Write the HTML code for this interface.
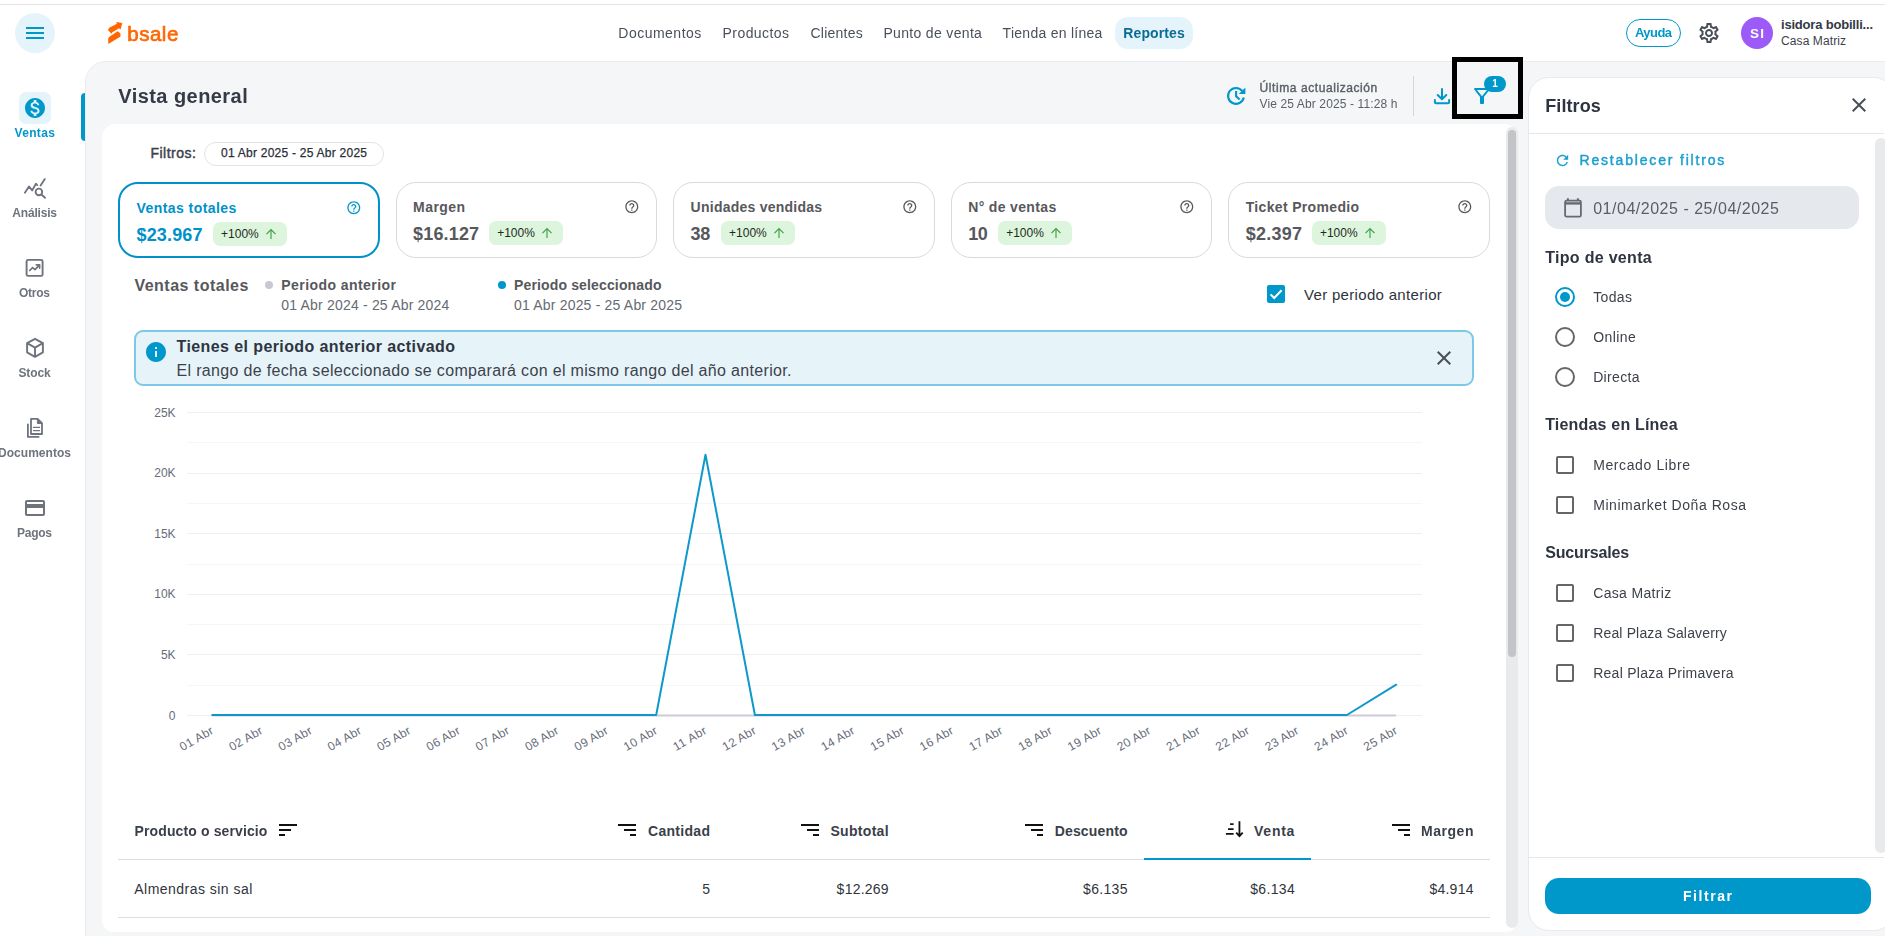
<!DOCTYPE html>
<html lang="es">
<head>
<meta charset="utf-8">
<title>Bsale - Reportes - Vista general</title>
<style>
*{box-sizing:border-box;margin:0;padding:0}
html,body{width:1885px;height:936px;overflow:hidden;background:#fff}
body{position:relative;font-family:"Liberation Sans",sans-serif;color:#333a45}
.t{position:absolute;white-space:pre;line-height:1;display:block}
.abs{position:absolute}
svg{position:absolute;overflow:visible;display:block}
#topline{left:0;top:4px;width:1885px;height:1px;background:#e4e4e6}
#main{left:85px;top:61px;width:1800px;height:875px;background:#f5f6f8;border-left:1px solid #ececef;border-top:1px solid #ececef;border-top-left-radius:21px}
#card{left:102px;top:124px;width:1416px;height:808px;background:#fff;border-radius:14px 14px 12px 12px}
#track{left:1506px;top:127px;width:12px;height:801px;background:#e9eaec;border-radius:6px}
#thumb{left:1508px;top:130px;width:8px;height:527px;background:#c3c4c8;border-radius:4px}
#fpanel{left:1528px;top:77px;width:367px;height:854px;background:#fff;border:1px solid #e8e9ec;border-radius:21px}
#fhead{left:1529px;top:133px;width:355px;height:1px;background:#e6e7ea}
#ffoot{left:1529px;top:857px;width:355px;height:1px;background:#e6e7ea}
#ftrack{left:1875px;top:138px;width:12px;height:715px;background:#e9eaec;border-radius:6px}
#fbtn{left:1545px;top:878px;width:326px;height:36px;background:#0098cb;border-radius:14px}
#dateinp{left:1545px;top:186px;width:314px;height:43px;background:#e5e8ed;border-radius:14px}
#blackbox{left:1452px;top:57px;width:71px;height:62px;border:5px solid #000}
#vdiv{left:1413px;top:76px;width:1px;height:40px;background:#d4d6da}
#indicator{left:81px;top:93px;width:4px;height:48px;background:#0098cb;border-radius:4px 0 0 4px}
#venbg{left:19px;top:92px;width:32px;height:32px;background:#e5f4fb;border-radius:7px}
#hamb{left:15px;top:13px;width:40px;height:40px;border-radius:50%;background:#e5f4fb}
#navpill{left:1115px;top:17px;width:78px;height:32px;border-radius:13px;background:#e5f4fb}
#ayuda{left:1626px;top:19px;width:55px;height:28px;border:1px solid #0098cb;border-radius:14px}
#avatar{left:1741px;top:17px;width:32px;height:32px;border-radius:50%;background:#9c5af6}
#chip{left:204px;top:142px;width:180px;height:24px;border:1px solid #e2e3e6;border-radius:12px}
.kpi{top:182px;width:261.5px;height:76px;border:1px solid #dadadc;border-radius:20px;background:#fff}
.kpi.sel{border:2px solid #0091c8}
.badge{width:74px;height:24px;background:#dcf5dc;border-radius:7px}
.dot{width:8px;height:8px;border-radius:50%}
#chk{left:1267px;top:285px;width:18px;height:18px;background:#0098cb;border-radius:2px}
#banner{left:134px;top:330px;width:1340px;height:56px;background:#e6f4fa;border:2px solid #7cc8e6;border-radius:9px}
.hline{height:1px;background:#dcdde0;left:118px;width:1372px}
#venta-ul{left:1144px;top:858px;width:167px;height:2px;background:#0098cb}
.radio{width:20px;height:20px;border:2px solid #666;border-radius:50%}
.radio.on{border-color:#0098cb}
.radio.on::after{content:"";position:absolute;left:3px;top:3px;width:10px;height:10px;border-radius:50%;background:#0098cb}
.cbx{width:18px;height:18px;border:2px solid #666;border-radius:2px;left:1556px}
.gl{left:0;top:0;width:1885px;height:936px;will-change:transform;pointer-events:none}

</style>
</head>
<body>
<div class="abs" id="topline"></div>
<div class="abs" id="main"></div>
<div class="abs" id="card"></div>
<div class="abs" id="track"></div><div class="abs" id="thumb"></div>
<div class="abs" id="fpanel"></div><div class="abs" id="fhead"></div><div class="abs" id="ffoot"></div><div class="abs" id="ftrack"></div>
<header>
<div class="abs" id="hamb"></div>
<svg style="left:23px;top:21px" width="24" height="24" viewBox="0 0 24 24"><path fill="#0098cb" d="M3 18h18v-2H3v2zm0-5h18v-2H3v2zm0-7v2h18V6H3z"/></svg>
<svg style="left:100px;top:15px" width="90" height="35" viewBox="0 0 90 35"><path fill="#ff6600" d="M22.300 8.000 L16.100 6.900 L17.000 8.800 L9.700 12.600 Q7.500 13.900 8.300 15.500 L11.500 18.800 L12.300 17.200 L19.100 13.300 L20.600 14.500 Z M17.600 16.300 Q21.000 18.200 20.600 20.800 L20.200 21.700 L8.300 28.900 L8.200 24.000 Q8.300 22.600 9.800 21.600 Z"/></svg>
<div class="abs" id="navpill"></div>
<div class="abs" id="ayuda"></div>
<svg style="left:1697px;top:21px" width="24" height="24" viewBox="0 0 24 24"><path fill="#4a4f57" d="M19.43 12.98c.04-.32.07-.64.07-.98 0-.34-.03-.66-.07-.98l2.11-1.65c.19-.15.24-.42.12-.64l-2-3.46c-.09-.16-.26-.25-.44-.25-.06 0-.12.01-.17.03l-2.49 1c-.52-.4-1.08-.73-1.69-.98l-.38-2.65C14.46 2.18 14.25 2 14 2h-4c-.25 0-.46.18-.49.42l-.38 2.65c-.61.25-1.17.59-1.69.98l-2.49-1c-.06-.02-.12-.03-.18-.03-.17 0-.34.09-.43.25l-2 3.46c-.13.22-.07.49.12.64l2.11 1.65c-.04.32-.07.65-.07.98 0 .33.03.66.07.98l-2.11 1.65c-.19.15-.24.42-.12.64l2 3.46c.09.16.26.25.44.25.06 0 .12-.01.17-.03l2.49-1c.52.4 1.08.73 1.69.98l.38 2.65c.03.24.24.42.49.42h4c.25 0 .46-.18.49-.42l.38-2.65c.61-.25 1.17-.59 1.69-.98l2.49 1c.06.02.12.03.18.03.17 0 .34-.09.43-.25l2-3.46c.12-.22.07-.49-.12-.64l-2.11-1.65zm-1.98-1.71c.04.31.05.52.05.73 0 .21-.02.43-.05.73l-.14 1.13.89.7 1.08.84-.7 1.21-1.27-.51-1.04-.42-.9.68c-.43.32-.84.56-1.25.73l-1.06.43-.16 1.13-.2 1.35h-1.4l-.19-1.35-.16-1.13-1.06-.43c-.43-.18-.83-.41-1.23-.71l-.91-.7-1.06.43-1.27.51-.7-1.21 1.08-.84.89-.7-.14-1.13c-.03-.31-.05-.54-.05-.74s.02-.43.05-.73l.14-1.13-.89-.7-1.08-.84.7-1.21 1.27.51 1.04.42.9-.68c.43-.32.84-.56 1.25-.73l1.06-.43.16-1.13.2-1.35h1.39l.19 1.35.16 1.13 1.06.43c.43.18.83.41 1.23.71l.91.7 1.06-.43 1.27-.51.7 1.21-1.07.85-.89.7.14 1.13zM12 8c-2.21 0-4 1.79-4 4s1.79 4 4 4 4-1.79 4-4-1.79-4-4-4zm0 6c-1.1 0-2-.9-2-2s.9-2 2-2 2 .9 2 2-.9 2-2 2z"/></svg>
<div class="abs" id="avatar"></div>
<span class="t" style="top:18.20px;font-size:13px;font-weight:700;color:#333a45;letter-spacing:-0.197px;left:1781.00px;">isidora bobilli...</span>
<span class="t" style="top:34.64px;font-size:12px;color:#3d424a;letter-spacing:0.098px;left:1781.00px;">Casa Matriz</span>
</header>
<nav aria-label="Secciones">
<div class="abs" id="indicator"></div><div class="abs" id="venbg"></div>
<svg style="left:22.5px;top:95.8px" width="24" height="24" viewBox="0 0 24 24"><path fill="#0098cb" d="M12 2C6.48 2 2 6.48 2 12s4.48 10 10 10 10-4.48 10-10S17.52 2 12 2zm1.41 16.09V20h-2.67v-1.93c-1.71-.36-3.16-1.46-3.27-3.4h1.96c.1 1.05.82 1.87 2.65 1.87 1.96 0 2.4-.98 2.4-1.59 0-.83-.44-1.61-2.67-2.14-2.48-.6-4.18-1.62-4.18-3.67 0-1.72 1.39-2.84 3.11-3.21V4h2.67v1.950c1.86.45 2.79 1.86 2.85 3.39H14.3c-.05-1.11-.64-1.87-2.22-1.87-1.5 0-2.4.68-2.4 1.64 0 .84.65 1.39 2.67 1.91s4.18 1.39 4.18 3.91c-.01 1.83-1.38 2.83-3.12 3.160z"/></svg>
<svg style="left:15px;top:170px" width="40" height="35" viewBox="0 0 40 35" fill="none" stroke="#6e737d" stroke-width="1.850" stroke-linecap="round" stroke-linejoin="round"><path d="M9.900 22.800 L14 16.500 L17.200 20.400 L20.900 13.700 L22.300 15.100"/><path d="M25.600 15.500 L29.800 9.100"/><circle cx="23.900" cy="21.900" r="3.300"/><path d="M26.700 24.800 L30 27.800"/></svg>
<svg style="left:15px;top:250px" width="40" height="35" viewBox="0 0 40 35" fill="none" stroke="#6e737d" stroke-width="1.900" stroke-linejoin="round"><rect x="11.600" y="9.900" width="16" height="16" rx="1.500"/><path d="M14.700 20.500 L17.600 17.600 L20 19.600 L24.300 15.200" stroke-width="1.700" stroke-linecap="round"/><path d="M21.300 14.800 H24.600 V18.100" stroke-width="1.700" stroke-linecap="round"/></svg>
<svg style="left:15px;top:330px" width="40" height="35" viewBox="0 0 40 35" fill="none" stroke="#6e737d" stroke-width="1.900" stroke-linejoin="round"><path d="M20 8.800 L27.900 13.200 V22.300 L20 26.800 L12.100 22.300 V13.200 Z"/><path d="M12.100 13.200 L20 17.700 L27.900 13.200 M20 17.700 V26.800"/></svg>
<svg style="left:15px;top:410px" width="40" height="35" viewBox="0 0 40 35" fill="none" stroke="#6e737d" stroke-width="1.800" stroke-linejoin="round"><path d="M16 8.900 H22.600 L27 13.100 V24 H16 Z"/><path d="M22.400 9.300 V13.500 H26.500 Z" fill="#6e737d" stroke-width="1"/><path d="M18.500 17.400 H24.500 M18.500 20.600 H24.500" stroke-width="1.400" stroke-linecap="round"/><path d="M12.900 14.500 V26.900 H23.600" stroke-linecap="round"/></svg>
<svg style="left:22.500px;top:496px" width="24" height="24" viewBox="0 0 24 24"><path fill="#6e737d" d="M20 4H4c-1.110 0-1.990.890-1.990 2L2 18c0 1.110.890 2 2 2h16c1.110 0 2-.890 2-2V6c0-1.110-.890-2-2-2zm0 14H4v-6h16v6zm0-10H4V6h16v2z"/></svg>
</nav>
<main>
<svg style="left:1215px;top:70px" width="60" height="50" viewBox="0 0 60 50" fill="none" stroke="#0098cb" stroke-width="2.100"><path d="M28.800 27.600 A7.950 7.950 0 1 1 27.300 21"/><path d="M30.400 17.400 V23.950 H23.800 Z" fill="#0098cb" stroke="none"/><path d="M21.100 21.100 V26.200 L24.600 29.400"/></svg>
<div class="abs" id="vdiv"></div>
<svg style="left:1430px;top:84px" width="24" height="24" viewBox="0 0 24 24" fill="none" stroke="#0098cb" stroke-width="2" stroke-linecap="round" stroke-linejoin="round"><path d="M12 5.100 V14.800 M7.700 11 L12 15.200 L16.300 11"/><path d="M4.900 16 V18.200 Q4.900 19.300 6 19.300 H18 Q19.100 19.300 19.100 18.200 V16"/></svg>
<svg style="left:1470px;top:84px" width="24" height="24" viewBox="0 0 24 24"><path fill="#0098cb" d="M7 6h10l-5.010 6.300L7 6zm-2.750-.390C6.270 8.200 10 13 10 13v6c0 .550.450 1 1 1h2c.550 0 1-.450 1-1v-6s3.720-4.800 5.740-7.390c.510-.660.040-1.610-.790-1.610H5.040c-.830 0-1.300.950-.790 1.610z"/></svg>
<div class="abs" style="left:1484px;top:76px;width:22px;height:16px;border-radius:8px;background:#0098cb"></div>
<div class="abs" id="blackbox"></div>
<span class="t" style="top:145.75px;font-size:14px;color:#3d424a;letter-spacing:0.5px;left:150.40px;-webkit-text-stroke:0.45px #3d424a;">Filtros:</span>
<div class="abs" id="chip"></div>
<span class="t" style="top:147.14px;font-size:12px;color:#2a2f37;letter-spacing:0.245px;left:221.00px;-webkit-text-stroke:0.25px #2a2f37;">01 Abr 2025 - 25 Abr 2025</span>
<div class="abs kpi sel" style="left:118.0px"></div>
<span class="t" style="top:201.05px;font-size:14px;font-weight:700;color:#0091c8;letter-spacing:0.434px;left:136.50px;">Ventas totales</span>
<span class="t" style="top:225.76px;font-size:18px;font-weight:700;color:#0091c8;letter-spacing:0.154px;left:136.50px;">$23.967</span>
<div class="abs badge" style="left:213.1px;top:222.0px"></div>
<span class="t" style="top:227.74px;font-size:12px;color:#1f2a1f;left:221.10px;">+100%</span>
<svg style="left:264.9px;top:228.0px" width="12" height="12" viewBox="0 0 12 12" fill="none" stroke="#43a047" stroke-width="1.150"><path d="M6 11 V1.800 M1.500 6.200 L6 1.600 L10.500 6.200"/></svg>
<svg style="left:345.5px;top:199.8px" width="15.600" height="15.600" viewBox="0 0 24 24"><path fill="#0096ca" d="M11 18h2v-2h-2v2zm1-16C6.48 2 2 6.48 2 12s4.48 10 10 10 10-4.48 10-10S17.52 2 12 2zm0 18c-4.41 0-8-3.59-8-8s3.59-8 8-8 8 3.59 8 8-3.59 8-8 8zm0-14c-2.21 0-4 1.79-4 4h2c0-1.100.9-2 2-2s2 .9 2 2c0 2-3 1.750-3 5h2c0-2.250 3-2.500 3-5 0-2.210-1.790-4-4-4z"/></svg>
<div class="abs kpi" style="left:395.6px"></div>
<span class="t" style="top:200.05px;font-size:14px;font-weight:700;color:#57585c;letter-spacing:0.441px;left:413.10px;">Margen</span>
<span class="t" style="top:224.76px;font-size:18px;font-weight:700;color:#57585c;letter-spacing:0.154px;left:413.10px;">$16.127</span>
<div class="abs badge" style="left:489.2px;top:221.0px"></div>
<span class="t" style="top:226.74px;font-size:12px;color:#1f2a1f;left:497.20px;">+100%</span>
<svg style="left:541.0px;top:227.0px" width="12" height="12" viewBox="0 0 12 12" fill="none" stroke="#43a047" stroke-width="1.150"><path d="M6 11 V1.800 M1.500 6.200 L6 1.600 L10.500 6.200"/></svg>
<svg style="left:624.3px;top:198.8px" width="15.600" height="15.600" viewBox="0 0 24 24"><path fill="#57585c" d="M11 18h2v-2h-2v2zm1-16C6.48 2 2 6.48 2 12s4.48 10 10 10 10-4.48 10-10S17.52 2 12 2zm0 18c-4.41 0-8-3.59-8-8s3.59-8 8-8 8 3.59 8 8-3.59 8-8 8zm0-14c-2.21 0-4 1.79-4 4h2c0-1.100.9-2 2-2s2 .9 2 2c0 2-3 1.750-3 5h2c0-2.250 3-2.500 3-5 0-2.210-1.790-4-4-4z"/></svg>
<div class="abs kpi" style="left:673.1px"></div>
<span class="t" style="top:200.05px;font-size:14px;font-weight:700;color:#57585c;letter-spacing:0.244px;left:690.60px;">Unidades vendidas</span>
<span class="t" style="top:224.76px;font-size:18px;font-weight:700;color:#57585c;letter-spacing:-0.231px;left:690.60px;">38</span>
<div class="abs badge" style="left:721.1px;top:221.0px"></div>
<span class="t" style="top:226.74px;font-size:12px;color:#1f2a1f;left:729.10px;">+100%</span>
<svg style="left:772.9px;top:227.0px" width="12" height="12" viewBox="0 0 12 12" fill="none" stroke="#43a047" stroke-width="1.150"><path d="M6 11 V1.800 M1.500 6.200 L6 1.600 L10.500 6.200"/></svg>
<svg style="left:901.8px;top:198.8px" width="15.600" height="15.600" viewBox="0 0 24 24"><path fill="#57585c" d="M11 18h2v-2h-2v2zm1-16C6.48 2 2 6.48 2 12s4.48 10 10 10 10-4.48 10-10S17.52 2 12 2zm0 18c-4.41 0-8-3.59-8-8s3.59-8 8-8 8 3.59 8 8-3.59 8-8 8zm0-14c-2.21 0-4 1.79-4 4h2c0-1.100.9-2 2-2s2 .9 2 2c0 2-3 1.750-3 5h2c0-2.250 3-2.500 3-5 0-2.210-1.790-4-4-4z"/></svg>
<div class="abs kpi" style="left:950.7px"></div>
<span class="t" style="top:200.05px;font-size:14px;font-weight:700;color:#57585c;letter-spacing:0.347px;left:968.20px;">N° de ventas</span>
<span class="t" style="top:224.76px;font-size:18px;font-weight:700;color:#57585c;letter-spacing:-0.331px;left:968.20px;">10</span>
<div class="abs badge" style="left:998.2px;top:221.0px"></div>
<span class="t" style="top:226.74px;font-size:12px;color:#1f2a1f;left:1006.20px;">+100%</span>
<svg style="left:1050.0px;top:227.0px" width="12" height="12" viewBox="0 0 12 12" fill="none" stroke="#43a047" stroke-width="1.150"><path d="M6 11 V1.800 M1.500 6.200 L6 1.600 L10.500 6.200"/></svg>
<svg style="left:1179.4px;top:198.8px" width="15.600" height="15.600" viewBox="0 0 24 24"><path fill="#57585c" d="M11 18h2v-2h-2v2zm1-16C6.48 2 2 6.48 2 12s4.48 10 10 10 10-4.48 10-10S17.52 2 12 2zm0 18c-4.41 0-8-3.59-8-8s3.59-8 8-8 8 3.59 8 8-3.59 8-8 8zm0-14c-2.21 0-4 1.79-4 4h2c0-1.100.9-2 2-2s2 .9 2 2c0 2-3 1.750-3 5h2c0-2.250 3-2.500 3-5 0-2.210-1.790-4-4-4z"/></svg>
<div class="abs kpi" style="left:1228.2px"></div>
<span class="t" style="top:200.05px;font-size:14px;font-weight:700;color:#57585c;letter-spacing:0.338px;left:1245.70px;">Ticket Promedio</span>
<span class="t" style="top:224.76px;font-size:18px;font-weight:700;color:#57585c;letter-spacing:0.247px;left:1245.70px;">$2.397</span>
<div class="abs badge" style="left:1311.9px;top:221.0px"></div>
<span class="t" style="top:226.74px;font-size:12px;color:#1f2a1f;left:1319.90px;">+100%</span>
<svg style="left:1363.7px;top:227.0px" width="12" height="12" viewBox="0 0 12 12" fill="none" stroke="#43a047" stroke-width="1.150"><path d="M6 11 V1.800 M1.500 6.200 L6 1.600 L10.500 6.200"/></svg>
<svg style="left:1456.9px;top:198.8px" width="15.600" height="15.600" viewBox="0 0 24 24"><path fill="#57585c" d="M11 18h2v-2h-2v2zm1-16C6.48 2 2 6.48 2 12s4.48 10 10 10 10-4.48 10-10S17.52 2 12 2zm0 18c-4.41 0-8-3.59-8-8s3.59-8 8-8 8 3.59 8 8-3.59 8-8 8zm0-14c-2.21 0-4 1.79-4 4h2c0-1.100.9-2 2-2s2 .9 2 2c0 2-3 1.750-3 5h2c0-2.250 3-2.500 3-5 0-2.210-1.790-4-4-4z"/></svg>
<span class="t" style="top:277.56px;font-size:16px;font-weight:700;color:#57585c;letter-spacing:0.492px;left:134.40px;font-weight:600;">Ventas totales</span>
<div class="abs dot" style="left:265px;top:281px;background:#cbc6d2"></div>
<span class="t" style="top:278.25px;font-size:14px;font-weight:700;color:#57585c;letter-spacing:0.431px;left:281.30px;">Periodo anterior</span>
<span class="t" style="top:298.15px;font-size:14px;color:#666a71;letter-spacing:0.189px;left:281.30px;">01 Abr 2024 - 25 Abr 2024</span>
<div class="abs dot" style="left:498px;top:281px;background:#0098cb"></div>
<span class="t" style="top:278.25px;font-size:14px;font-weight:700;color:#57585c;letter-spacing:0.146px;left:514.00px;">Periodo seleccionado</span>
<span class="t" style="top:298.15px;font-size:14px;color:#666a71;letter-spacing:0.189px;left:514.00px;">01 Abr 2025 - 25 Abr 2025</span>
<div class="abs" id="chk"></div>
<svg style="left:1267px;top:285px" width="18" height="18" viewBox="0 0 18 18" fill="none" stroke="#fff" stroke-width="2"><path d="M3.600 9.400 L7.200 13 L14.600 5.200"/></svg>
<span class="t" style="top:286.50px;font-size:15px;color:#2f343c;letter-spacing:0.318px;left:1304.00px;">Ver periodo anterior</span>
<div class="abs" id="banner"></div>
<svg style="left:144.3px;top:340px" width="24" height="24" viewBox="0 0 24 24"><path fill="#0098cb" d="M12 2C6.480 2 2 6.480 2 12s4.480 10 10 10 10-4.480 10-10S17.520 2 12 2zm1 15h-2v-6h2v6zm0-8h-2V7h2v2z"/></svg>
<span class="t" style="top:338.86px;font-size:16px;font-weight:700;color:#2f3540;letter-spacing:0.407px;left:176.50px;">Tienes el periodo anterior activado</span>
<span class="t" style="top:362.66px;font-size:16px;color:#3d424a;letter-spacing:0.332px;left:176.50px;">El rango de fecha seleccionado se comparará con el mismo rango del año anterior.</span>
<svg style="left:1432px;top:346px" width="24" height="24" viewBox="0 0 24 24"><path fill="#4a4f57" d="M19 6.410L17.590 5 12 10.590 6.410 5 5 6.410 10.590 12 5 17.590 6.410 19 12 13.410 17.590 19 19 17.590 13.410 12z"/></svg>
<svg style="left:0;top:0" width="1885" height="936" viewBox="0 0 1885 936">
<path d="M187 715.5 H1422" stroke="#eeeff3" stroke-width="1" fill="none"/>
<path d="M187 685.5 H1422" stroke="#f6f6f9" stroke-width="1" fill="none"/>
<path d="M187 654.5 H1422" stroke="#eeeff3" stroke-width="1" fill="none"/>
<path d="M187 624.5 H1422" stroke="#f6f6f9" stroke-width="1" fill="none"/>
<path d="M187 594.5 H1422" stroke="#eeeff3" stroke-width="1" fill="none"/>
<path d="M187 564.5 H1422" stroke="#f6f6f9" stroke-width="1" fill="none"/>
<path d="M187 533.5 H1422" stroke="#eeeff3" stroke-width="1" fill="none"/>
<path d="M187 503.5 H1422" stroke="#f6f6f9" stroke-width="1" fill="none"/>
<path d="M187 473.5 H1422" stroke="#eeeff3" stroke-width="1" fill="none"/>
<path d="M187 442.5 H1422" stroke="#f6f6f9" stroke-width="1" fill="none"/>
<path d="M187 412.5 H1422" stroke="#eeeff3" stroke-width="1" fill="none"/>
<path d="M212.200 715.500 H1396" stroke="#cfc9d6" stroke-width="2" fill="none"/>
<polyline points="212.2,715.0 261.5,715.0 310.9,715.0 360.2,715.0 409.5,715.0 458.9,715.0 508.2,715.0 557.5,715.0 606.9,715.0 656.2,715.0 705.5,454.8 754.9,715.0 804.2,715.0 853.5,715.0 902.9,715.0 952.2,715.0 1001.5,715.0 1050.9,715.0 1100.2,715.0 1149.5,715.0 1198.9,715.0 1248.2,715.0 1297.5,715.0 1346.9,715.0 1396.2,684.7" fill="none" stroke="#0f98cb" stroke-width="2" stroke-linejoin="round" stroke-linecap="round"/>
<text x="214.2" y="733.0" transform="rotate(-30 214.2 733.0)" text-anchor="end" font-size="12" fill="#666b7a" textLength="36.5" lengthAdjust="spacing">01 Abr</text>
<text x="263.5" y="733.0" transform="rotate(-30 263.5 733.0)" text-anchor="end" font-size="12" fill="#666b7a" textLength="36.5" lengthAdjust="spacing">02 Abr</text>
<text x="312.9" y="733.0" transform="rotate(-30 312.9 733.0)" text-anchor="end" font-size="12" fill="#666b7a" textLength="36.5" lengthAdjust="spacing">03 Abr</text>
<text x="362.2" y="733.0" transform="rotate(-30 362.2 733.0)" text-anchor="end" font-size="12" fill="#666b7a" textLength="36.5" lengthAdjust="spacing">04 Abr</text>
<text x="411.5" y="733.0" transform="rotate(-30 411.5 733.0)" text-anchor="end" font-size="12" fill="#666b7a" textLength="36.5" lengthAdjust="spacing">05 Abr</text>
<text x="460.9" y="733.0" transform="rotate(-30 460.9 733.0)" text-anchor="end" font-size="12" fill="#666b7a" textLength="36.5" lengthAdjust="spacing">06 Abr</text>
<text x="510.2" y="733.0" transform="rotate(-30 510.2 733.0)" text-anchor="end" font-size="12" fill="#666b7a" textLength="36.5" lengthAdjust="spacing">07 Abr</text>
<text x="559.5" y="733.0" transform="rotate(-30 559.5 733.0)" text-anchor="end" font-size="12" fill="#666b7a" textLength="36.5" lengthAdjust="spacing">08 Abr</text>
<text x="608.9" y="733.0" transform="rotate(-30 608.9 733.0)" text-anchor="end" font-size="12" fill="#666b7a" textLength="36.5" lengthAdjust="spacing">09 Abr</text>
<text x="658.2" y="733.0" transform="rotate(-30 658.2 733.0)" text-anchor="end" font-size="12" fill="#666b7a" textLength="36.5" lengthAdjust="spacing">10 Abr</text>
<text x="707.5" y="733.0" transform="rotate(-30 707.5 733.0)" text-anchor="end" font-size="12" fill="#666b7a" textLength="36.5" lengthAdjust="spacing">11 Abr</text>
<text x="756.9" y="733.0" transform="rotate(-30 756.9 733.0)" text-anchor="end" font-size="12" fill="#666b7a" textLength="36.5" lengthAdjust="spacing">12 Abr</text>
<text x="806.2" y="733.0" transform="rotate(-30 806.2 733.0)" text-anchor="end" font-size="12" fill="#666b7a" textLength="36.5" lengthAdjust="spacing">13 Abr</text>
<text x="855.5" y="733.0" transform="rotate(-30 855.5 733.0)" text-anchor="end" font-size="12" fill="#666b7a" textLength="36.5" lengthAdjust="spacing">14 Abr</text>
<text x="904.9" y="733.0" transform="rotate(-30 904.9 733.0)" text-anchor="end" font-size="12" fill="#666b7a" textLength="36.5" lengthAdjust="spacing">15 Abr</text>
<text x="954.2" y="733.0" transform="rotate(-30 954.2 733.0)" text-anchor="end" font-size="12" fill="#666b7a" textLength="36.5" lengthAdjust="spacing">16 Abr</text>
<text x="1003.5" y="733.0" transform="rotate(-30 1003.5 733.0)" text-anchor="end" font-size="12" fill="#666b7a" textLength="36.5" lengthAdjust="spacing">17 Abr</text>
<text x="1052.9" y="733.0" transform="rotate(-30 1052.9 733.0)" text-anchor="end" font-size="12" fill="#666b7a" textLength="36.5" lengthAdjust="spacing">18 Abr</text>
<text x="1102.2" y="733.0" transform="rotate(-30 1102.2 733.0)" text-anchor="end" font-size="12" fill="#666b7a" textLength="36.5" lengthAdjust="spacing">19 Abr</text>
<text x="1151.5" y="733.0" transform="rotate(-30 1151.5 733.0)" text-anchor="end" font-size="12" fill="#666b7a" textLength="36.5" lengthAdjust="spacing">20 Abr</text>
<text x="1200.9" y="733.0" transform="rotate(-30 1200.9 733.0)" text-anchor="end" font-size="12" fill="#666b7a" textLength="36.5" lengthAdjust="spacing">21 Abr</text>
<text x="1250.2" y="733.0" transform="rotate(-30 1250.2 733.0)" text-anchor="end" font-size="12" fill="#666b7a" textLength="36.5" lengthAdjust="spacing">22 Abr</text>
<text x="1299.5" y="733.0" transform="rotate(-30 1299.5 733.0)" text-anchor="end" font-size="12" fill="#666b7a" textLength="36.5" lengthAdjust="spacing">23 Abr</text>
<text x="1348.9" y="733.0" transform="rotate(-30 1348.9 733.0)" text-anchor="end" font-size="12" fill="#666b7a" textLength="36.5" lengthAdjust="spacing">24 Abr</text>
<text x="1398.2" y="733.0" transform="rotate(-30 1398.2 733.0)" text-anchor="end" font-size="12" fill="#666b7a" textLength="36.5" lengthAdjust="spacing">25 Abr</text>
</svg>
<span class="t" style="top:709.54px;font-size:12px;color:#666b7a;right:1709.50px;">0</span>
<span class="t" style="top:648.94px;font-size:12px;color:#666b7a;letter-spacing:-0.188px;right:1709.69px;">5K</span>
<span class="t" style="top:588.34px;font-size:12px;color:#666b7a;letter-spacing:-0.08px;right:1709.58px;">10K</span>
<span class="t" style="top:527.74px;font-size:12px;color:#666b7a;letter-spacing:-0.08px;right:1709.58px;">15K</span>
<span class="t" style="top:467.14px;font-size:12px;color:#666b7a;letter-spacing:-0.08px;right:1709.58px;">20K</span>
<span class="t" style="top:406.54px;font-size:12px;color:#666b7a;letter-spacing:-0.08px;right:1709.58px;">25K</span>
<svg style="left:275.9px;top:818px" width="24" height="24" viewBox="0 0 24 24"><path fill="#111" d="M3 18h6v-2H3v2zM3 6v2h18V6H3zm0 7h12v-2H3v2z"/></svg>
<svg style="left:615.1px;top:818px" width="24" height="24" viewBox="0 0 24 24"><path fill="#111" d="M21 18h-6v-2h6v2zM21 6v2H3V6h18zm0 7H9v-2h12v2z"/></svg>
<span class="t" style="top:823.85px;font-size:14px;font-weight:700;color:#3a3f4a;letter-spacing:0.301px;right:1174.70px;">Cantidad</span>
<svg style="left:798.1px;top:818px" width="24" height="24" viewBox="0 0 24 24"><path fill="#111" d="M21 18h-6v-2h6v2zM21 6v2H3V6h18zm0 7H9v-2h12v2z"/></svg>
<span class="t" style="top:823.85px;font-size:14px;font-weight:700;color:#3a3f4a;letter-spacing:0.314px;right:996.09px;">Subtotal</span>
<svg style="left:1022.2px;top:818px" width="24" height="24" viewBox="0 0 24 24"><path fill="#111" d="M21 18h-6v-2h6v2zM21 6v2H3V6h18zm0 7H9v-2h12v2z"/></svg>
<span class="t" style="top:823.85px;font-size:14px;font-weight:700;color:#3a3f4a;letter-spacing:0.153px;right:757.35px;">Descuento</span>
<svg style="left:1215px;top:815px" width="40" height="30" viewBox="0 0 40 30" fill="none" stroke="#111" stroke-width="1.900"><path d="M15.100 9.100 H18.600 M13 14.100 H18.600 M10.900 18.900 H18.600"/><path d="M24.450 6.200 V21.200 M21.200 17.600 L24.450 21.100 L27.700 17.600" stroke-width="1.800"/></svg>
<span class="t" style="top:823.85px;font-size:14px;font-weight:700;color:#3a3f4a;letter-spacing:0.76px;right:589.84px;">Venta</span>
<svg style="left:1389.1px;top:818px" width="24" height="24" viewBox="0 0 24 24"><path fill="#111" d="M21 18h-6v-2h6v2zM21 6v2H3V6h18zm0 7H9v-2h12v2z"/></svg>
<div class="abs hline" style="top:859px"></div><div class="abs" id="venta-ul"></div>
<span class="t" style="top:881.85px;font-size:14px;color:#2f343c;letter-spacing:0.469px;left:134.30px;">Almendras sin sal</span>
<span class="t" style="top:881.85px;font-size:14px;color:#2f343c;right:1175.00px;">5</span>
<span class="t" style="top:881.85px;font-size:14px;color:#2f343c;letter-spacing:0.232px;right:996.17px;">$12.269</span>
<span class="t" style="top:881.85px;font-size:14px;color:#2f343c;letter-spacing:0.334px;right:757.17px;">$6.135</span>
<span class="t" style="top:881.85px;font-size:14px;color:#2f343c;letter-spacing:0.334px;right:589.97px;">$6.134</span>
<span class="t" style="top:881.85px;font-size:14px;color:#2f343c;letter-spacing:0.254px;right:411.25px;">$4.914</span>
<div class="abs hline" style="top:917px"></div>
</main>
<aside aria-label="Filtros">
<svg style="left:1847px;top:93px" width="24" height="24" viewBox="0 0 24 24"><path fill="#4a4f57" d="M19 6.410L17.590 5 12 10.590 6.410 5 5 6.410 10.590 12 5 17.590 6.410 19 12 13.410 17.590 19 19 17.590 13.410 12z"/></svg>
<svg style="left:1553.5px;top:151.800px" width="17" height="17" viewBox="0 0 24 24"><path fill="#1a9fd0" d="M17.650 6.350C16.200 4.900 14.210 4 12 4c-4.420 0-7.990 3.580-7.990 8s3.570 8 7.990 8c3.730 0 6.840-2.550 7.730-6h-2.080c-.820 2.330-3.040 4-5.650 4-3.310 0-6-2.690-6-6s2.690-6 6-6c1.660 0 3.140.690 4.220 1.780L13 11h7V4l-2.350 2.350z"/></svg>
<div class="abs" id="dateinp"></div>
<svg style="left:1561px;top:196px" width="24" height="24" viewBox="0 0 24 24" fill="none" stroke="#66696f" stroke-width="1.800"><rect x="4.100" y="4.700" width="15.800" height="15.900" rx="1.400"/><path d="M4.100 7.400 H19.900" stroke-width="2.400"/><path d="M6.900 2.200 V5 M16.900 2.200 V5" stroke-width="2"/></svg>
<div class="abs radio on" style="left:1555px;top:287px"></div>
<div class="abs radio" style="left:1555px;top:327px"></div>
<div class="abs radio" style="left:1555px;top:367px"></div>
<div class="abs cbx" style="top:456px"></div>
<div class="abs cbx" style="top:496px"></div>
<div class="abs cbx" style="top:584px"></div>
<div class="abs cbx" style="top:624px"></div>
<div class="abs cbx" style="top:664px"></div>
<div class="abs" id="fbtn"></div>
</aside>
<div class="abs gl">
<span class="t" style="top:23.55px;font-size:20.5px;color:#ff6600;letter-spacing:0.496px;left:127.30px;-webkit-text-stroke:0.65px #ff6600;">bsale</span>
<span class="t" style="top:26.35px;font-size:14px;color:#4a505b;letter-spacing:0.49px;left:618.30px;">Documentos</span>
<span class="t" style="top:26.35px;font-size:14px;color:#4a505b;letter-spacing:0.419px;left:722.60px;">Productos</span>
<span class="t" style="top:26.35px;font-size:14px;color:#4a505b;letter-spacing:0.244px;left:810.50px;">Clientes</span>
<span class="t" style="top:26.35px;font-size:14px;color:#4a505b;letter-spacing:0.332px;left:883.40px;">Punto de venta</span>
<span class="t" style="top:26.35px;font-size:14px;color:#4a505b;letter-spacing:0.271px;left:1002.60px;">Tienda en línea</span>
<span class="t" style="top:26.35px;font-size:14px;font-weight:700;color:#0a6c94;letter-spacing:0.116px;left:1123.30px;">Reportes</span>
<span class="t" style="top:26.00px;font-size:13px;font-weight:700;color:#0098cb;letter-spacing:-0.562px;left:1635.00px;">Ayuda</span>
<span class="t" style="top:26.57px;font-size:13.5px;font-weight:700;color:#fff;letter-spacing:1.234px;left:1750.00px;">SI</span>
<span class="t" style="top:127.44px;font-size:12px;font-weight:700;color:#0098cb;letter-spacing:0.339px;left:14.50px;">Ventas</span>
<span class="t" style="top:207.44px;font-size:12px;font-weight:700;color:#6e737d;letter-spacing:-0.19px;left:12.35px;">Análisis</span>
<span class="t" style="top:287.44px;font-size:12px;font-weight:700;color:#6e737d;letter-spacing:-0.254px;left:19.00px;">Otros</span>
<span class="t" style="top:367.44px;font-size:12px;font-weight:700;color:#6e737d;letter-spacing:-0.072px;left:18.40px;">Stock</span>
<span class="t" style="top:447.44px;font-size:12px;font-weight:700;color:#6e737d;letter-spacing:0.035px;left:-2.00px;">Documentos</span>
<span class="t" style="top:527.44px;font-size:12px;font-weight:700;color:#6e737d;letter-spacing:-0.254px;left:17.00px;">Pagos</span>
<span class="t" style="top:85.87px;font-size:20px;font-weight:700;color:#343a46;letter-spacing:0.438px;left:118.30px;">Vista general</span>
<span class="t" style="top:81.84px;font-size:12px;color:#5a5f67;letter-spacing:0.583px;left:1259.50px;-webkit-text-stroke:0.4px #5a5f67;">Última actualización</span>
<span class="t" style="top:97.84px;font-size:12px;color:#5a5f67;letter-spacing:0.125px;left:1259.50px;">Vie 25 Abr 2025 - 11:28 h</span>
<span class="t" style="top:79.13px;font-size:10px;font-weight:700;color:#fff;left:1492.22px;">1</span>
<span class="t" style="top:823.85px;font-size:14px;font-weight:700;color:#3a3f4a;letter-spacing:0.116px;left:134.60px;">Producto o servicio</span>
<span class="t" style="top:823.85px;font-size:14px;font-weight:700;color:#3a3f4a;letter-spacing:0.541px;right:410.96px;">Margen</span>
<span class="t" style="top:96.96px;font-size:18px;font-weight:700;color:#2f3540;letter-spacing:0.081px;left:1545.30px;">Filtros</span>
<span class="t" style="top:153.05px;font-size:14px;color:#1a9fd0;letter-spacing:1.82px;left:1579.50px;-webkit-text-stroke:0.45px #1a9fd0;">Restablecer filtros</span>
<span class="t" style="top:200.86px;font-size:16px;color:#5a5e66;letter-spacing:0.515px;left:1593.20px;">01/04/2025 - 25/04/2025</span>
<span class="t" style="top:249.56px;font-size:16px;font-weight:700;color:#2f3540;letter-spacing:0.305px;left:1545.20px;">Tipo de venta</span>
<span class="t" style="top:289.95px;font-size:14px;color:#3d424a;letter-spacing:0.335px;left:1593.20px;">Todas</span>
<span class="t" style="top:329.95px;font-size:14px;color:#3d424a;letter-spacing:0.426px;left:1593.20px;">Online</span>
<span class="t" style="top:369.95px;font-size:14px;color:#3d424a;letter-spacing:0.323px;left:1593.20px;">Directa</span>
<span class="t" style="top:417.46px;font-size:16px;font-weight:700;color:#2f3540;letter-spacing:0.191px;left:1545.20px;">Tiendas en Línea</span>
<span class="t" style="top:457.95px;font-size:14px;color:#3d424a;letter-spacing:0.608px;left:1593.20px;">Mercado Libre</span>
<span class="t" style="top:497.95px;font-size:14px;color:#3d424a;letter-spacing:0.548px;left:1593.20px;">Minimarket Doña Rosa</span>
<span class="t" style="top:545.26px;font-size:16px;font-weight:700;color:#2f3540;letter-spacing:-0.155px;left:1545.20px;">Sucursales</span>
<span class="t" style="top:585.95px;font-size:14px;color:#3d424a;letter-spacing:0.331px;left:1593.20px;">Casa Matriz</span>
<span class="t" style="top:625.95px;font-size:14px;color:#3d424a;letter-spacing:0.151px;left:1593.20px;">Real Plaza Salaverry</span>
<span class="t" style="top:665.95px;font-size:14px;color:#3d424a;letter-spacing:0.264px;left:1593.20px;">Real Plaza Primavera</span>
<span class="t" style="top:889.15px;font-size:14px;font-weight:700;color:#fff;letter-spacing:1.552px;left:1683.00px;">Filtrar</span>
</div>
</body>
</html>
